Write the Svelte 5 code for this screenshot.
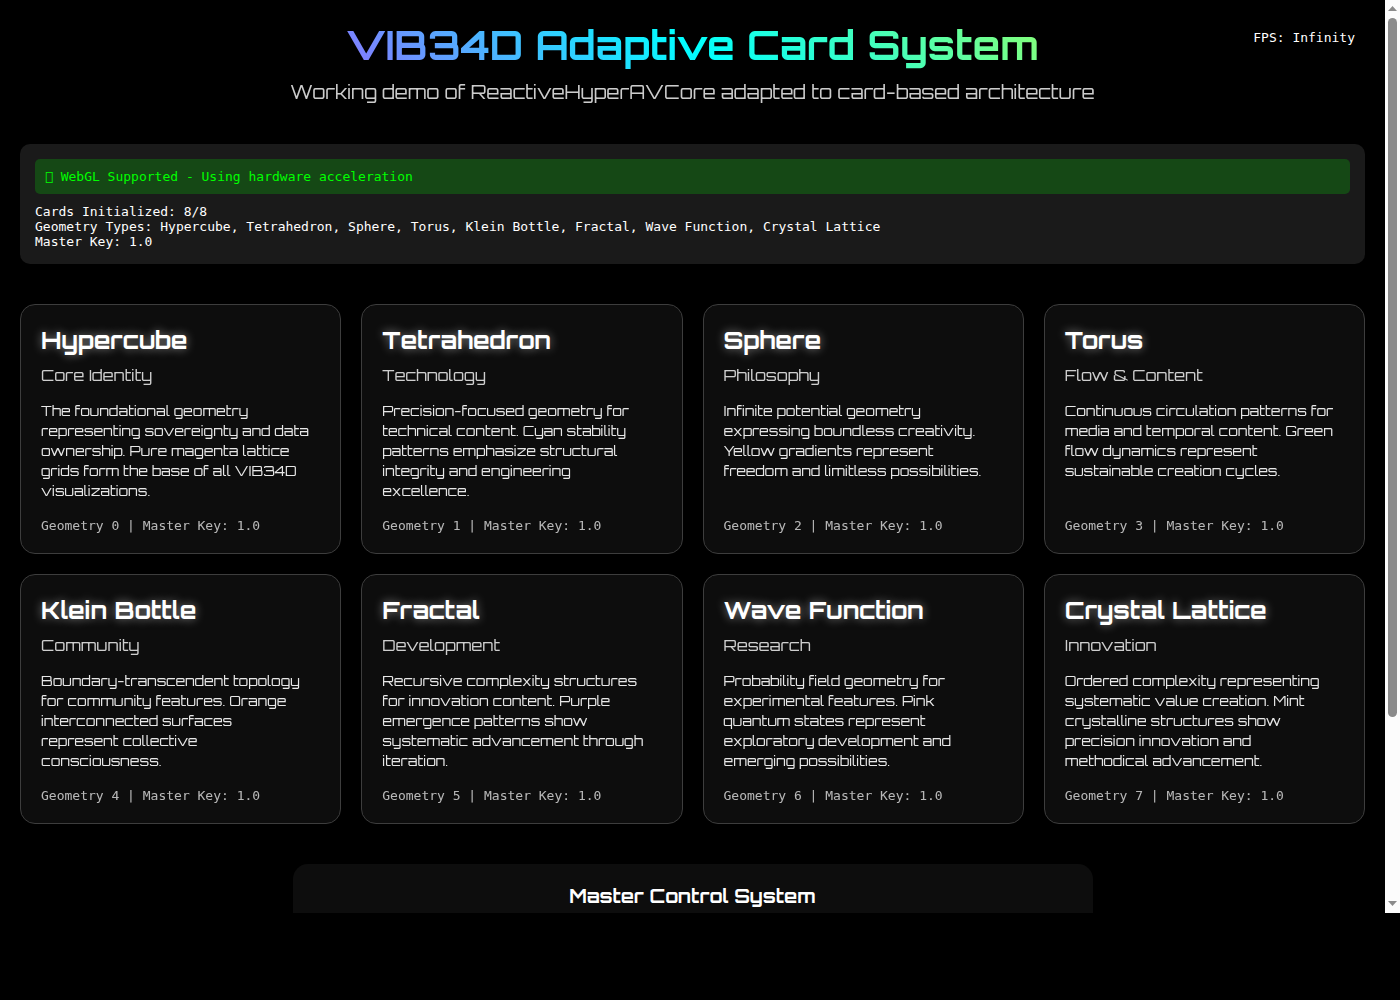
<script>
  const status = [
    'Cards Initialized: 8/8',
    'Geometry Types: Hypercube, Tetrahedron, Sphere, Torus, Klein Bottle, Fractal, Wave Function, Crystal Lattice',
    'Master Key: 1.0',
  ];

  const cards = [
    { name: 'Hypercube', role: 'Core Identity', text: 'The foundational geometry representing sovereignty and data ownership. Pure magenta lattice grids form the base of all VIB34D visualizations.' },
    { name: 'Tetrahedron', role: 'Technology', text: 'Precision-focused geometry for technical content. Cyan stability patterns emphasize structural integrity and engineering excellence.' },
    { name: 'Sphere', role: 'Philosophy', text: 'Infinite potential geometry expressing boundless creativity. Yellow gradients represent freedom and limitless possibilities.' },
    { name: 'Torus', role: 'Flow & Content', text: 'Continuous circulation patterns for media and temporal content. Green flow dynamics represent sustainable creation cycles.' },
    { name: 'Klein Bottle', role: 'Community', text: 'Boundary-transcendent topology for community features. Orange interconnected surfaces represent collective consciousness.' },
    { name: 'Fractal', role: 'Development', text: 'Recursive complexity structures for innovation content. Purple emergence patterns show systematic advancement through iteration.' },
    { name: 'Wave Function', role: 'Research', text: 'Probability field geometry for experimental features. Pink quantum states represent exploratory development and emerging possibilities.' },
    { name: 'Crystal Lattice', role: 'Innovation', text: 'Ordered complexity representing systematic value creation. Mint crystalline structures show precision innovation and methodical advancement.' },
  ];
</script>

<div class="window">
  <main>
    <header>
      <h1>VIB34D Adaptive Card System</h1>
      <p>Working demo of ReactiveHyperAVCore adapted to card-based architecture</p>
    </header>

    <section class="status">
      <p class="supported">&#xe900; WebGL Supported - Using hardware acceleration</p>
      {#each status as line}
        <p>{line}</p>
      {/each}
    </section>

    <section class="grid">
      {#each cards as card, i}
        <article>
          <h2>{card.name}</h2>
          <p class="role">{card.role}</p>
          <p class="text">{card.text}</p>
          <p class="meta">Geometry {i} | Master Key: 1.0</p>
        </article>
      {/each}
    </section>

    <section class="controls">
      <h3>Master Control System</h3>
    </section>
    <div class="fps">FPS: Infinity</div>
  </main>

  <div class="scrollbar" aria-hidden="true">
    <svg width="9" height="5" viewBox="0 0 9 5"><path d="M4.5 0 9 5H0z" /></svg>
    <div class="track"><div class="thumb"></div></div>
    <svg width="9" height="5" viewBox="0 0 9 5"><path d="M0 0h9L4.5 5z" /></svg>
  </div>
</div>

<style>
  :global(body) {
    margin: 0;
    background: #000;
  }

  .window {
    display: flex;
    height: calc(100vh - 87px);
    overflow: hidden;
    color: #fff;
    font-family: Orbitron, 'DejaVu Sans', sans-serif;
  }

  h1, h2, h3, p {
    margin: 0;
  }

  main {
    position: relative;
    flex: 1;
    min-width: 0;
    padding: 20px;
  }

  header {
    margin-bottom: 40px;
    text-align: center;
  }

  h1 {
    margin-bottom: 10px;
    background: linear-gradient(45deg, #f0f, #0ff, #ff0);
    background-clip: text;
    color: transparent;
    font-size: 40px;
    font-weight: 700;
    line-height: 50px;
  }

  header p {
    font-size: 19px;
    line-height: 24px;
    opacity: 0.8;
  }

  .status {
    margin-bottom: 40px;
    padding: 15px;
    border-radius: 10px;
    background: #1a1a1a;
    font-family: 'DejaVu Sans Mono', monospace;
    font-size: 13px;
    line-height: 15px;
  }

  .status .supported {
    margin-bottom: 10px;
    padding: 10px;
    border-radius: 5px;
    background: #154815;
    color: #0f0;
  }

  .grid {
    display: grid;
    grid-template-columns: repeat(auto-fit, minmax(300px, 1fr));
    gap: 20px;
    margin-bottom: 40px;
  }

  article {
    display: flex;
    flex-direction: column;
    padding: 20px;
    border: 1px solid #3d3d3d;
    border-radius: 15px;
    background: #0d0d0d;
  }

  h2 {
    margin-bottom: 10px;
    font-size: 24px;
    font-weight: 700;
    line-height: 30px;
    text-shadow: 0 0 10px rgba(255, 255, 255, 0.5);
  }

  .role {
    margin-bottom: 16px;
    font-size: 16px;
    line-height: 20px;
    opacity: 0.8;
  }

  .text {
    margin-bottom: 17px;
    padding-right: 8px;
    font-size: 14px;
    line-height: 20px;
    opacity: 0.9;
  }

  .meta {
    margin-top: auto;
    font-family: 'DejaVu Sans Mono', monospace;
    font-size: 13px;
    line-height: 15px;
    opacity: 0.7;
  }

  .controls {
    box-sizing: border-box;
    max-width: 800px;
    margin: 0 auto;
    padding: 20px;
    border-radius: 15px;
    background: #0d0d0d;
    text-align: center;
  }

  h3 {
    margin-bottom: 20px;
    font-size: 19px;
    font-weight: 700;
    line-height: 24px;
  }

  .fps {
    position: absolute;
    top: 30px;
    right: 30px;
    font-family: 'DejaVu Sans Mono', monospace;
    font-size: 13px;
    line-height: 15px;
  }

  .scrollbar {
    display: flex;
    flex-direction: column;
    align-items: center;
    box-sizing: border-box;
    width: 15px;
    padding: 6px 0 7px;
    background: #fcfcfc;
  }

  .scrollbar svg {
    flex: none;
    fill: #8b8b8b;
  }

  .track {
    flex: 1;
    width: 9px;
    padding: 7px 0;
  }

  .thumb {
    height: 79.8%;
    border-radius: 5px;
    background: #8b8b8b;
  }
</style>
